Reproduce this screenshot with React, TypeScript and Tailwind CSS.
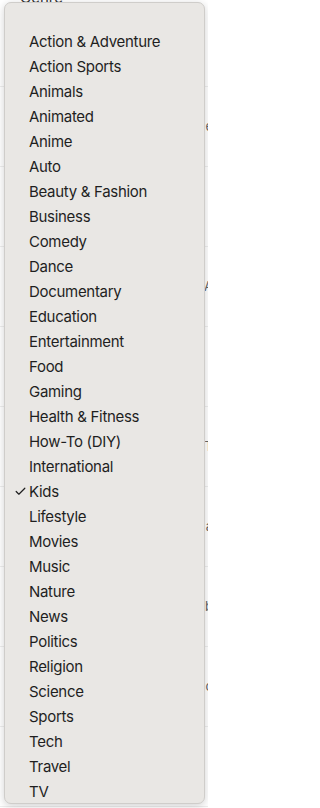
import { Check } from 'lucide-react';

const genres = [
  'Action & Adventure',
  'Action Sports',
  'Animals',
  'Animated',
  'Anime',
  'Auto',
  'Beauty & Fashion',
  'Business',
  'Comedy',
  'Dance',
  'Documentary',
  'Education',
  'Entertainment',
  'Food',
  'Gaming',
  'Health & Fitness',
  'How-To (DIY)',
  'International',
  'Kids',
  'Lifestyle',
  'Movies',
  'Music',
  'Nature',
  'News',
  'Politics',
  'Religion',
  'Science',
  'Sports',
  'Tech',
  'Travel',
  'TV',
];

const selected = 'Kids';

// glimpses of the page behind the menu, on its right edge
const behind = ['›', 'e', '', 'A', '', 'T', 'a', 'b', 'c', 'f'];

export default function App() {
  return (
    <div
      className="relative w-[208px] h-[808px] overflow-hidden bg-white"
      style={{ fontFamily: 'Inter, "Noto Sans", sans-serif' }}
    >
      {/* Page underneath the menu (mostly hidden) */}
      <div className="flex flex-col">
        <div className="h-[20px] pl-[20px] -mt-[13px] text-[15px] text-[#333]">Genre</div>
        {behind.map((c, i) => (
          <div key={i} className="h-[80px] flex items-center justify-end text-[13px] text-[#666] border-b border-[#eee]">
            <span className="-mr-[5px]">{c}</span>
          </div>
        ))}
      </div>

      {/* Popup menu */}
      <div className="absolute left-[4px] top-[2px] w-[201px] h-[802px] rounded-[7px] border border-[#cfcdca] bg-[#e9e7e4] shadow-[0_2px_8px_rgba(0,0,0,0.18)] pt-[26px]">
        <ul className="flex flex-col">
          {genres.map((g) => (
            <li key={g} className="flex items-center h-[25px] pl-[10px] text-[15px] tracking-[-0.3px] text-[#1f1f1f]">
              <span className="w-[14px] flex items-center">
                {g === selected && <Check size={13} strokeWidth={2.2} className="text-[#1f1f1f] -ml-[1px]" />}
              </span>
              <span className="leading-none">{g}</span>
            </li>
          ))}
        </ul>
      </div>
    </div>
  );
}
